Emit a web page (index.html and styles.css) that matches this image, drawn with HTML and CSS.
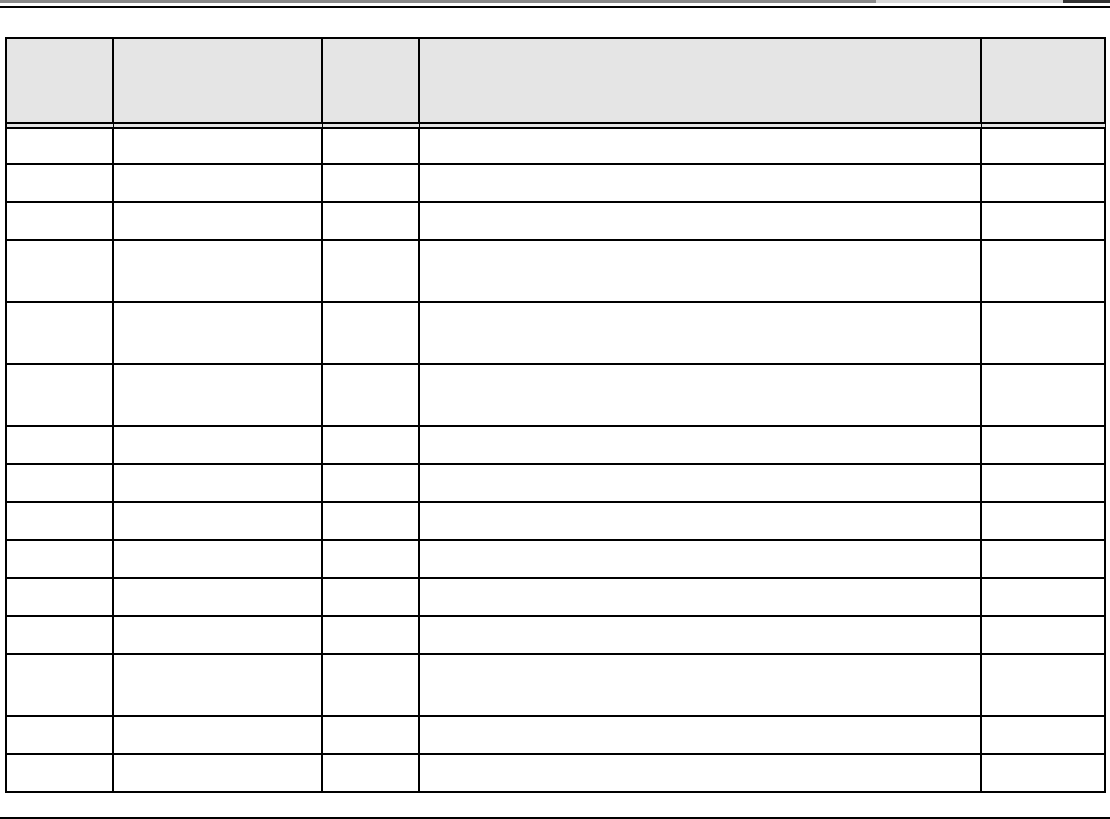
FILE: index.html
```
<!DOCTYPE html>
<html>
<head>
<meta charset="utf-8">
<link rel="stylesheet" href="styles.css">
</head>
<body>
<div class="strip"><span class="seg dark"></span><span class="seg light"></span><span class="seg darker"></span></div>
<div class="rule"></div>
<div class="grid">
  <div class="row head"><div class="cell"></div><div class="cell"></div><div class="cell"></div><div class="cell"></div><div class="cell"></div></div>
  <div class="row first"><div class="cell"></div><div class="cell"></div><div class="cell"></div><div class="cell"></div><div class="cell"></div></div>
  <div class="row"><div class="cell"></div><div class="cell"></div><div class="cell"></div><div class="cell"></div><div class="cell"></div></div>
  <div class="row"><div class="cell"></div><div class="cell"></div><div class="cell"></div><div class="cell"></div><div class="cell"></div></div>
  <div class="row tall"><div class="cell"></div><div class="cell"></div><div class="cell"></div><div class="cell"></div><div class="cell"></div></div>
  <div class="row tall"><div class="cell"></div><div class="cell"></div><div class="cell"></div><div class="cell"></div><div class="cell"></div></div>
  <div class="row tall"><div class="cell"></div><div class="cell"></div><div class="cell"></div><div class="cell"></div><div class="cell"></div></div>
  <div class="row"><div class="cell"></div><div class="cell"></div><div class="cell"></div><div class="cell"></div><div class="cell"></div></div>
  <div class="row"><div class="cell"></div><div class="cell"></div><div class="cell"></div><div class="cell"></div><div class="cell"></div></div>
  <div class="row"><div class="cell"></div><div class="cell"></div><div class="cell"></div><div class="cell"></div><div class="cell"></div></div>
  <div class="row"><div class="cell"></div><div class="cell"></div><div class="cell"></div><div class="cell"></div><div class="cell"></div></div>
  <div class="row"><div class="cell"></div><div class="cell"></div><div class="cell"></div><div class="cell"></div><div class="cell"></div></div>
  <div class="row"><div class="cell"></div><div class="cell"></div><div class="cell"></div><div class="cell"></div><div class="cell"></div></div>
  <div class="row tall"><div class="cell"></div><div class="cell"></div><div class="cell"></div><div class="cell"></div><div class="cell"></div></div>
  <div class="row"><div class="cell"></div><div class="cell"></div><div class="cell"></div><div class="cell"></div><div class="cell"></div></div>
  <div class="row"><div class="cell"></div><div class="cell"></div><div class="cell"></div><div class="cell"></div><div class="cell"></div></div>
</div>
<div class="rule bottom"></div>
</body>
</html>
```
FILE: styles.css
```
html, body {
  margin: 0;
  padding: 0;
  background: #fff;
  font-family: "Liberation Sans", Arial, sans-serif;
}
* { box-sizing: border-box; }
.strip {
  display: flex;
  height: 3px;
}
.seg { display: block; height: 3px; }
.seg.dark { width: 876px; background: #8a8a8a; }
.seg.light { width: 187px; background: #d8d8d8; }
.seg.darker { flex: 1; background: #333; }
.rule {
  height: 2px;
  background: #000;
  margin-top: 3px;
}
.grid {
  margin: 29px 0 0 5px;
  width: 1101px;
  border-left: 2px solid #000;
  border-top: 2px solid #000;
}
.row {
  display: grid;
  grid-template-columns: 107px 209px 97px 562px 124px;
  height: 38px;
}
.cell {
  border-right: 2px solid #000;
  border-bottom: 2px solid #000;
}
.row.head { height: 90px; }
.row.head .cell {
  background: #e5e5e5;
  border-bottom: 7px double #000;
}
.row.first { height: 36px; }
.row.tall { height: 62px; }
.rule.bottom {
  margin-top: 24px;
  height: 2px;
}
```
